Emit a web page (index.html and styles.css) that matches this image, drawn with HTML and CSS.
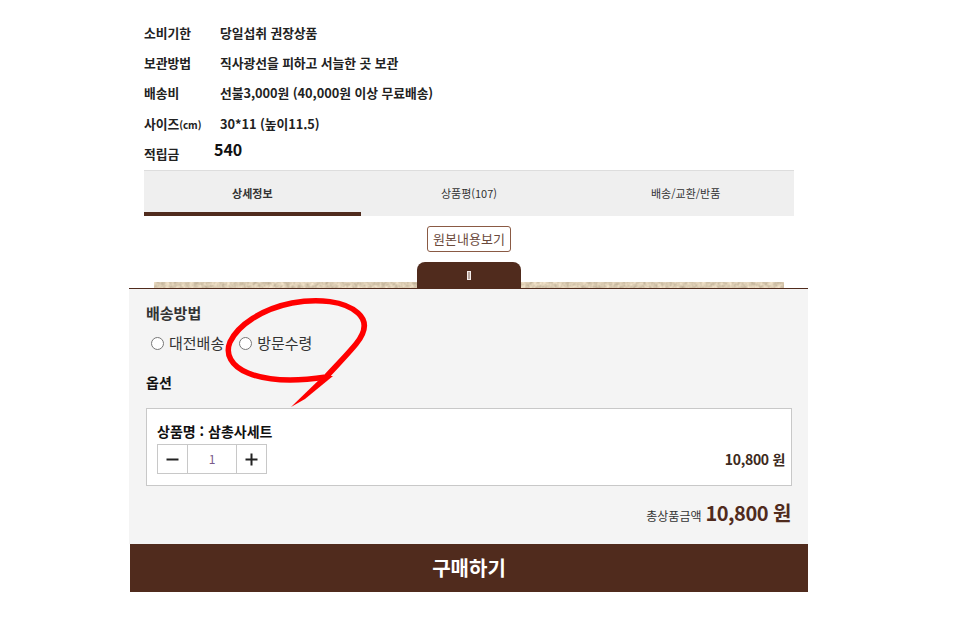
FILE: index.html
```html
<!DOCTYPE html>
<html lang="ko">
<head>
  <meta charset="UTF-8">
  <title>상품 상세</title>
  <link rel="stylesheet" href="styles.css">
</head>
<body>
  <div class="detail">
    <div class="info-row"><span class="info-label">소비기한</span><span>당일섭취 권장상품</span></div>
    <div class="info-row"><span class="info-label">보관방법</span><span>직사광선을 피하고 서늘한 곳 보관</span></div>
    <div class="info-row"><span class="info-label">배송비</span><span>선불3,000원 (40,000원 이상 무료배송)</span></div>
    <div class="info-row row-size"><span class="info-label">사이즈<small>(cm)</small></span><span>30*11 (높이11.5)</span></div>
    <div class="info-row row-point"><span class="point-label">적립금</span><span class="point-value">540</span></div>

    <div class="tabs">
      <div class="tab active">상세정보</div>
      <div class="tab">상품평(107)</div>
      <div class="tab">배송/교환/반품</div>
    </div>

    <div class="origin-wrap"><a class="origin-btn">원본내용보기</a></div>

    <div class="band">
      <!-- paper texture strip -->
      <svg class="band-noise" width="630" height="6">
        <filter id="paper" x="0" y="0" width="100%" height="100%" color-interpolation-filters="sRGB">
          <feTurbulence type="fractalNoise" baseFrequency="0.25" numOctaves="3" seed="4"/>
          <feColorMatrix values="0.3 0 0 0 0.71  0.3 0 0 0 0.65  0.3 0 0 0 0.55  0 0 0 0 1"/>
        </filter>
        <rect width="630" height="6" filter="url(#paper)"/>
      </svg>
      <div class="band-tab"><span class="tofu"></span></div>
    </div>
  </div>

  <div class="order">
    <div class="panel">
      <h3 class="ship-title">배송방법</h3>
      <div class="ship-options">
        <label class="ship-option"><input type="radio" name="ship">대전배송</label>
        <label class="ship-option"><input type="radio" name="ship">방문수령</label>
      </div>
      <h4 class="option-title">옵션</h4>
      <div class="option-box">
        <div class="option-left">
          <div class="option-name">상품명 : 삼총사세트</div>
          <div class="stepper">
            <span class="step">
              <svg width="13" height="13" viewBox="0 0 13 13"><path d="M0.5 6.5h12" stroke="#222" stroke-width="2" fill="none"/></svg>
            </span>
            <span class="qty">1</span>
            <span class="step">
              <svg width="13" height="13" viewBox="0 0 13 13"><path d="M0.5 6.5h12M6.5 0.5v12" stroke="#222" stroke-width="2" fill="none"/></svg>
            </span>
          </div>
        </div>
        <div class="option-price">10,800 원</div>
      </div>
      <div class="total"><span class="total-label">총상품금액</span><span class="total-value">10,800 원</span></div>
    </div>
    <div class="buy-btn">구매하기</div>

    <!-- red marker circle drawn over the screenshot -->
    <svg class="scribble" width="160" height="125" viewBox="220 290 160 125">
      <path d="M326 377 C300 381 270 382 248 373 C231 366 225 354 230 342 C238 325 262 309 292 303 C318 298 345 301 358 313 C368 322 365 333 356 344 C347 355 336 366 326 377" fill="none" stroke="#f00" stroke-width="5.5" stroke-linecap="round"/>
      <path d="M291 407 L323 376 L333 376 L305 399 Z" fill="#f00"/>
    </svg>
  </div>
</body>
</html>
```

FILE: styles.css
```css
* {
  box-sizing: border-box;
}
body {
  margin: 0;
  background: #fff;
  font-family: "Noto Sans CJK KR", "Noto Sans", sans-serif;
  color: #222;
}
.detail {
  width: 650px;
  margin-left: 144px;
  padding-top: 18px;
}
.info-row {
  display: flex;
  height: 30px;
  line-height: 30px;
  font-size: 12.8px;
  font-weight: 700;
  letter-spacing: -0.05px;
  color: #222;
}
.info-label {
  width: 76px;
}
.info-label small {
  font-size: 10px;
}
.row-size {
  margin-top: 1px;
}
.row-point {
  height: 31px;
}
.point-label {
  width: 70px;
}
.point-value {
  font-size: 16px;
  font-weight: 700;
  line-height: 20px;
  color: #111;
}
.tabs {
  display: flex;
  height: 46px;
  background: #efefef;
  border-top: 1px solid #ddd;
}
.tab {
  flex: 1;
  padding-top: 12px;
  text-align: center;
  font-size: 11px;
  line-height: 20px;
  color: #333;
}
.tab.active {
  border-bottom: 4px solid #502b1d;
  font-weight: 700;
}
.origin-wrap {
  display: flex;
  justify-content: center;
  padding-top: 10px;
}
.origin-btn {
  width: 84px;
  height: 26px;
  line-height: 24px;
  text-align: center;
  font-size: 13px;
  color: #6b4a3c;
  border: 1px solid #8a5a44;
  border-radius: 3px;
}
.band {
  position: relative;
  display: flex;
  justify-content: center;
  align-items: flex-end;
  height: 26px;
  margin: 10px 10px 0;
}
.band-noise {
  position: absolute;
  left: 0;
  bottom: 0;
}
.band-tab {
  position: relative;
  display: flex;
  justify-content: center;
  align-items: center;
  width: 104px;
  height: 26px;
  background: #502b1d;
  border-radius: 8px 8px 0 0;
}
.tofu {
  display: block;
  width: 4px;
  height: 9px;
  background: #b9a8a0;
  border: 1px solid #f4ecea;
}
.order {
  position: relative;
  width: 679px;
  margin-left: 129px;
}
.panel {
  height: 256px;
  padding: 0 16px 0 17px;
  background: #f4f4f4;
  border-top: 1px solid #502b1d;
}
.ship-title {
  margin: 14px 0 0;
  font-size: 15px;
  line-height: 20px;
  font-weight: 700;
  color: #333;
}
.ship-options {
  display: flex;
  margin: 10px 0 0 5px;
  gap: 15px;
}
.ship-option {
  display: flex;
  align-items: center;
  gap: 5px;
  font-size: 15px;
  line-height: 20px;
  color: #333;
}
.ship-option input {
  width: 13px;
  height: 13px;
  margin: 0;
}
.option-title {
  margin: 19px 0 0;
  font-size: 14px;
  line-height: 20px;
  font-weight: 700;
  color: #111;
}
.option-box {
  display: flex;
  justify-content: space-between;
  align-items: flex-end;
  height: 78px;
  margin-top: 16px;
  padding: 13px 6px 11px 10px;
  background: #fff;
  border: 1px solid #c8c8c8;
}
.option-name {
  font-size: 14px;
  line-height: 20px;
  font-weight: 700;
  color: #111;
}
.stepper {
  display: flex;
  width: 110px;
  height: 30px;
  margin-top: 3px;
  border: 1px solid #c8c8c8;
}
.step {
  display: flex;
  justify-content: center;
  align-items: center;
  width: 29px;
}
.qty {
  flex: 1;
  text-align: center;
  font-size: 12px;
  line-height: 28px;
  color: #7a5a8a;
  border-left: 1px solid #c8c8c8;
  border-right: 1px solid #c8c8c8;
}
.option-price {
  font-size: 14px;
  line-height: 30px;
  font-weight: 700;
  letter-spacing: -0.3px;
  color: #3d2a20;
}
.total {
  display: flex;
  justify-content: flex-end;
  align-items: baseline;
  gap: 4px;
  margin-top: 12px;
  height: 30px;
  padding-right: 1px;
}
.total-label {
  font-size: 12px;
  color: #333;
}
.total-value {
  font-size: 20px;
  line-height: 30px;
  font-weight: 700;
  letter-spacing: -0.5px;
  color: #502b1d;
}
.buy-btn {
  height: 48px;
  margin-left: 1px;
  line-height: 48px;
  text-align: center;
  font-size: 20px;
  font-weight: 700;
  color: #fff;
  background: #502b1d;
}
.scribble {
  position: absolute;
  left: 91px;
  top: 2px;
}
```
